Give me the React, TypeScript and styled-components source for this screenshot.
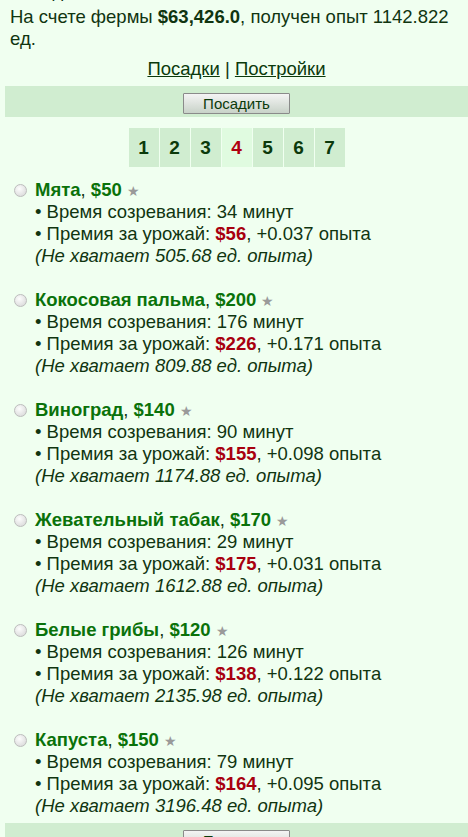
import React from "react";
import styled, { createGlobalStyle } from "styled-components";

const GlobalStyle = createGlobalStyle`
  html, body {
    margin: 0;
    padding: 0;
    background: #f0fff0;
  }
  body {
    font-family: "Liberation Sans", Arial, sans-serif;
    font-size: 18.5px;
    line-height: 22px;
    color: #103510;
    overflow: hidden;
  }
`;

const Page = styled.div`
  padding-left: 5px;
  margin-top: -20px;
`;

const TextBlock = styled.div<{ $gap?: number }>`
  padding: 0 5px;
  margin-bottom: ${(p) => p.$gap ?? 0}px;
`;

const Strong = styled.b`
  font-weight: bold;
`;

const Nav = styled.div`
  text-align: center;
  padding: 8px 0 6px;
`;

const NavLink = styled.a`
  color: #0b3a0b;
  text-decoration: underline;
  cursor: pointer;
`;

const ActionBar = styled.div`
  background: #d0edd0;
  display: flex;
  justify-content: center;
  padding: 7px 0 3px;
  height: 21px;
`;

const PlantButton = styled.button`
  font-family: "Liberation Sans", Arial, sans-serif;
  font-size: 15px;
  color: #0b3a0b;
  width: 107px;
  height: 21px;
  padding: 0;
  border: 1px solid #8a8a8a;
  border-radius: 1px;
  background: linear-gradient(#f4f4f4, #c8d2c8);
  cursor: pointer;
`;

const Pager = styled.div`
  display: flex;
  justify-content: center;
  gap: 1px;
  margin: 11px 0 12px;
`;

const PageCell = styled.div<{ $current?: boolean }>`
  width: 30px;
  height: 39px;
  display: flex;
  align-items: center;
  justify-content: center;
  font-weight: bold;
  font-size: 19px;
  background: ${(p) => (p.$current ? "#e0fbe0" : "#d0edd0")};
  color: ${(p) => (p.$current ? "#b00010" : "#0b3a0b")};
`;

const PlantList = styled.div`
  display: flex;
  flex-direction: column;
  gap: 22px;
  padding: 0 5px 6px;
`;

const Plant = styled.div`
  display: grid;
  grid-template-columns: 20px 1fr;
  column-gap: 5px;
`;

const Radio = styled.span`
  width: 13px;
  height: 13px;
  margin: 5px 0 0 4px;
  border-radius: 50%;
  border: 1px solid #bdbdbd;
  background: radial-gradient(circle at 40% 35%, #fdfdfd, #d4d4d4);
  box-sizing: border-box;
`;

const Details = styled.div``;

const Line = styled.div`
  height: 22px;
  white-space: nowrap;
`;

const Name = styled.span`
  color: #0a720a;
  font-weight: bold;
`;

const Star = styled.span`
  color: #9a9a9a;
  font-size: 14px;
  line-height: 1;
  margin-left: 5px;
`;

const Price = styled.span`
  color: #a8000f;
  font-weight: bold;
`;

const Missing = styled(Line)`
  font-style: italic;
`;

type Crop = {
  name: string;
  cost: number;
  minutes: number;
  reward: number;
  xp: string;
  lack: string;
};

const crops: Crop[] = [
  { name: "Мята", cost: 50, minutes: 34, reward: 56, xp: "0.037", lack: "505.68" },
  { name: "Кокосовая пальма", cost: 200, minutes: 176, reward: 226, xp: "0.171", lack: "809.88" },
  { name: "Виноград", cost: 140, minutes: 90, reward: 155, xp: "0.098", lack: "1174.88" },
  { name: "Жевательный табак", cost: 170, minutes: 29, reward: 175, xp: "0.031", lack: "1612.88" },
  { name: "Белые грибы", cost: 120, minutes: 126, reward: 138, xp: "0.122", lack: "2135.98" },
  { name: "Капуста", cost: 150, minutes: 79, reward: 164, xp: "0.095", lack: "3196.48" },
];

const pages = [1, 2, 3, 4, 5, 6, 7];

export default function App() {
  return (
    <>
      <GlobalStyle />
      <Page>
        <TextBlock $gap={4}>Ваш дом</TextBlock>
        <TextBlock>
          На счете фермы <Strong>$63,426.0</Strong>, получен опыт 1142.822 ед.
        </TextBlock>
        <Nav>
          <NavLink>Посадки</NavLink> | <NavLink>Постройки</NavLink>
        </Nav>
        <ActionBar>
          <PlantButton>Посадить</PlantButton>
        </ActionBar>
        <Pager>
          {pages.map((n) => (
            <PageCell key={n} $current={n === 4}>
              {n}
            </PageCell>
          ))}
        </Pager>
        <PlantList>
          {crops.map((c) => (
            <Plant key={c.name}>
              <Radio />
              <Details>
                <Line>
                  <Name>{c.name}</Name>, <Name>${c.cost}</Name>
                  <Star>★</Star>
                </Line>
                <Line>• Время созревания: {c.minutes} минут</Line>
                <Line>
                  • Премия за урожай: <Price>${c.reward}</Price>, +{c.xp} опыта
                </Line>
                <Missing>(Не хватает {c.lack} ед. опыта)</Missing>
              </Details>
            </Plant>
          ))}
        </PlantList>
        <ActionBar>
          <PlantButton>Посадить</PlantButton>
        </ActionBar>
      </Page>
    </>
  );
}
